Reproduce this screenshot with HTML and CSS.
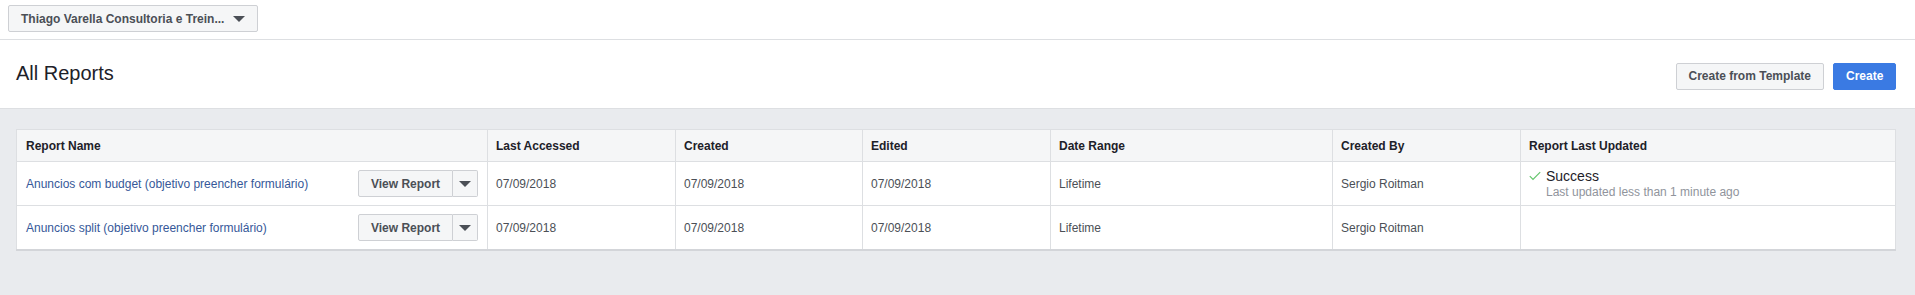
FILE: index.html
```html
<!DOCTYPE html>
<html lang="en">
<head>
    <meta charset="UTF-8">
    <title>All Reports</title>
    <link rel="stylesheet" href="styles.css">
</head>
<body>
    <div class="topbar">
        <button class="account-picker">
            <span class="account-name">Thiago Varella Consultoria e Trein...</span>
            <span class="caret"></span>
        </button>
    </div>

    <div class="page-header">
        <h1>All Reports</h1>
        <div class="header-actions">
            <button class="btn">Create from Template</button>
            <button class="btn btn-primary">Create</button>
        </div>
    </div>

    <div class="content">
        <table class="reports">
            <colgroup>
                <col style="width: 471px">
                <col style="width: 188px">
                <col style="width: 187px">
                <col style="width: 188px">
                <col style="width: 282px">
                <col style="width: 188px">
                <col style="width: 375px">
            </colgroup>
            <thead>
                <tr>
                    <th>Report Name</th>
                    <th>Last Accessed</th>
                    <th>Created</th>
                    <th>Edited</th>
                    <th>Date Range</th>
                    <th>Created By</th>
                    <th>Report Last Updated</th>
                </tr>
            </thead>
            <tbody>
                <tr>
                    <td>
                        <div class="name-cell">
                            <a href="#">Anuncios com budget (objetivo preencher formulário)</a>
                            <div class="split-btn">
                                <button class="split-main">View Report</button>
                                <button class="split-caret"><span class="caret"></span></button>
                            </div>
                        </div>
                    </td>
                    <td>07/09/2018</td>
                    <td>07/09/2018</td>
                    <td>07/09/2018</td>
                    <td>Lifetime</td>
                    <td>Sergio Roitman</td>
                    <td>
                        <div class="status">
                            <svg class="check" width="12" height="10" viewBox="0 0 12 10">
                                <polyline points="0.8,5.2 4,8.4 11.2,1.2" fill="none" stroke="#63c56c" stroke-width="1.2"/>
                            </svg>
                            <span class="status-title">Success</span>
                        </div>
                        <div class="status-note">Last updated less than 1 minute ago</div>
                    </td>
                </tr>
                <tr>
                    <td>
                        <div class="name-cell">
                            <a href="#">Anuncios split (objetivo preencher formulário)</a>
                            <div class="split-btn">
                                <button class="split-main">View Report</button>
                                <button class="split-caret"><span class="caret"></span></button>
                            </div>
                        </div>
                    </td>
                    <td>07/09/2018</td>
                    <td>07/09/2018</td>
                    <td>07/09/2018</td>
                    <td>Lifetime</td>
                    <td>Sergio Roitman</td>
                    <td></td>
                </tr>
            </tbody>
        </table>
    </div>
</body>
</html>
```

FILE: styles.css
```css
body {
    margin: 0;
    padding: 0;
    font-family: "Liberation Sans", Arial, Helvetica, sans-serif;
    font-size: 12px;
    color: #1d2129;
    background: #e9ebee;
    min-height: 295px;
}

button {
    font-family: inherit;
    cursor: pointer;
}

.caret {
    display: inline-block;
    width: 0;
    height: 0;
    border-left: 6px solid transparent;
    border-right: 6px solid transparent;
    border-top: 6px solid #4b4f56;
}

/* top bar */
.topbar {
    background: #fff;
    height: 40px;
    border-bottom: 1px solid #dddfe2;
    box-sizing: border-box;
    padding: 5px 8px 0;
}

.account-picker {
    display: flex;
    align-items: center;
    gap: 9px;
    height: 27px;
    padding: 0 12px 0 12px;
    background: #f5f6f7;
    border: 1px solid #ced0d4;
    border-radius: 2px;
    font-size: 12px;
    font-weight: bold;
    color: #4b4f56;
}

.account-name {
    white-space: nowrap;
}

/* page header */
.page-header {
    background: #fff;
    height: 69px;
    box-sizing: border-box;
    border-bottom: 1px solid #dddfe2;
    padding: 0 19px 0 16px;
    display: flex;
    align-items: center;
    justify-content: space-between;
}

.page-header h1 {
    margin: 0 0 1px;
    font-size: 20px;
    font-weight: normal;
    color: #1d2129;
}

.header-actions {
    display: flex;
    gap: 9px;
    margin-top: 4px;
}

.btn {
    height: 27px;
    padding: 0 12px;
    background: #f5f6f7;
    border: 1px solid #ced0d4;
    border-radius: 2px;
    font-size: 12px;
    font-weight: bold;
    color: #4b4f56;
}

.btn-primary {
    width: 63px;
    background: #3a7ae3;
    border-color: #3a7ae3;
    color: #fff;
}

/* table */
.content {
    padding: 20px 20px 0 16px;
}

.reports {
    width: 1879px;
    table-layout: fixed;
    border-collapse: collapse;
    background: #fff;
    border: 1px solid #dddfe2;
    border-bottom: 2px solid #d3d5d9;
}

.reports th,
.reports td {
    border: 1px solid #dddfe2;
    padding: 0 8px;
    text-align: left;
    vertical-align: middle;
}

.reports th {
    height: 31px;
    background: #f5f6f7;
    font-weight: bold;
    color: #1d2129;
}

.reports td {
    height: 43px;
    color: #4b4f56;
}

.reports td:first-child,
.reports th:first-child {
    padding-left: 9px;
}

.name-cell {
    display: flex;
    align-items: center;
    justify-content: space-between;
    padding-right: 1px;
}

.name-cell a {
    color: #365899;
    text-decoration: none;
}

.split-btn {
    display: flex;
    height: 27px;
}

.split-main,
.split-caret {
    background: #f5f6f7;
    border: 1px solid #ced0d4;
    font-size: 12px;
    font-weight: bold;
    color: #4b4f56;
}

.split-main {
    width: 95px;
    border-radius: 2px 0 0 2px;
}

.split-caret {
    width: 25px;
    border-left: none;
    border-radius: 0 2px 2px 0;
    display: flex;
    align-items: center;
    justify-content: center;
    padding: 0;
}

.status {
    display: flex;
    align-items: center;
    gap: 5px;
}

.status-title {
    font-size: 14px;
    color: #1d2129;
}

.status-note {
    padding-left: 17px;
    color: #90949c;
    margin-top: 1px;
}
```
